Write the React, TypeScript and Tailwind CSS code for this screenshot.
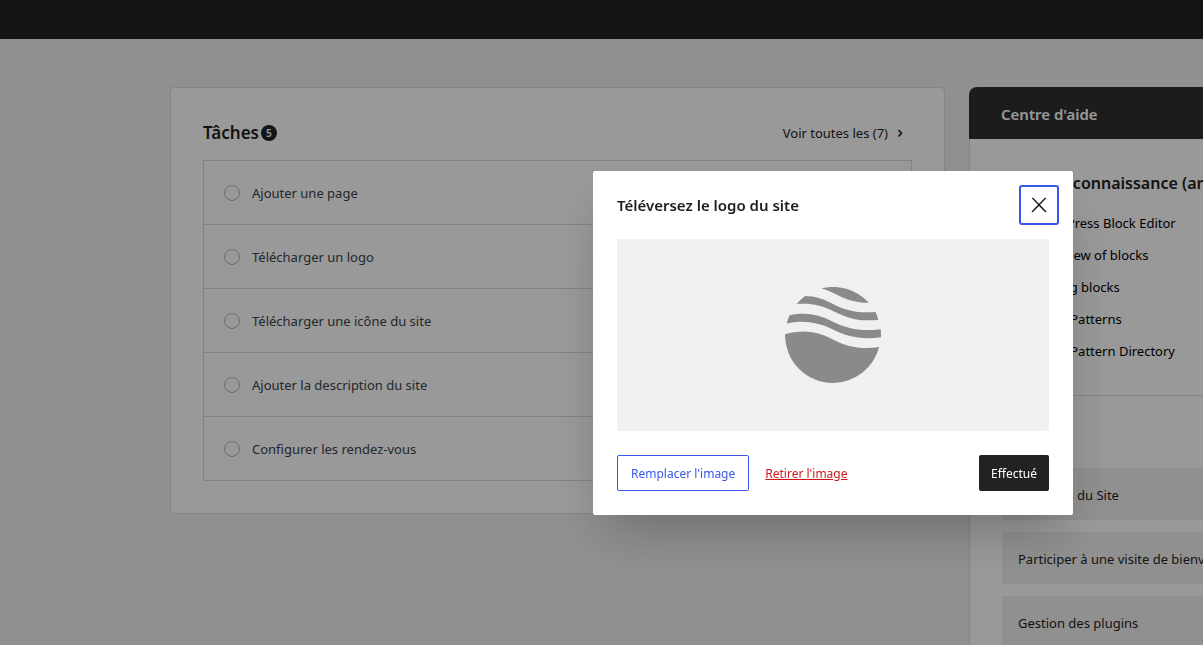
const tasks = [
  "Ajouter une page",
  "Télécharger un logo",
  "Télécharger une icône du site",
  "Ajouter la description du site",
  "Configurer les rendez-vous",
];

const articles = [
  "WordPress Block Editor",
  "Overview of blocks",
  "Adding blocks",
  "Block Patterns",
  "Block Pattern Directory",
];

const tours = [
  "Réglages du Site",
  "Participer à une visite de bienvenue",
  "Gestion des plugins",
];

const ChevronIcon = () => (
  <svg viewBox="0 0 8 10" className="h-[10px] w-2" fill="none" stroke="currentColor" strokeWidth="1.6" aria-hidden="true">
    <path d="M2.5 1 5.5 4.2 2.5 7.5" />
  </svg>
);

const CloseIcon = () => (
  <svg viewBox="0 0 24 24" className="h-6 w-6" fill="currentColor" aria-hidden="true">
    <path d="M13 11.8l6.1-6.3-1-1-6.1 6.2-6.1-6.2-1 1 6.1 6.3-6.5 6.7 1 1 6.5-6.6 6.5 6.6 1-1z" />
  </svg>
);

const SiteLogo = () => (
  <svg viewBox="0 0 96 96" className="h-24 w-24" fill="#8a8a8a" role="img" aria-label="Logo">
    <path d="M36.5 1.4A48 48 0 0 1 83.8 15.8C72 16 62 13 54 8.8C48 5.4 42 2.8 36.5 1.4Z" />
    <path d="M20.2 8.9C30 9 39 12 48 16.9C61 23.7 74 26.4 90.6 25A48 48 0 0 1 93.3 32.8C76 34.8 63 31.4 50 24.9C37 18.2 26 15.9 11.6 16.9A48 48 0 0 1 20.2 8.9Z" />
    <path d="M4.6 28.2C21 24.8 34 27.4 48 34.8C63 42.2 77 44.6 95.7 42.2A48 48 0 0 1 95.9 50.2C77 52.7 63 50.2 48 42.6C33 35 18 33 1.7 36.5A48 48 0 0 1 4.6 28.2Z" />
    <path d="M0 47.3C17 42 33 44.3 48 52.4C62 60 77 62.5 94.2 60A48 48 0 0 1 48 96A48 48 0 0 1 0 47.3Z" />
  </svg>
);

const TasksCard = () => (
  <section className="min-w-[775px] flex-1 self-start rounded border border-[#dcdcde] bg-white px-8 pb-8">
    <div className="flex h-[72px] items-center justify-between pt-[18px]">
      <h2 className="flex items-center gap-0.5 text-[17px] font-semibold text-[#1e1e1e]">
        Tâches
        <span className="flex h-4 w-4 items-center justify-center rounded-full bg-[#1d2327] text-[10px] leading-4 text-white">
          5
        </span>
      </h2>
      <a href="#taches" className="flex items-center gap-2 pt-0.5 pr-2 text-[13px] text-[#1e1e1e]">
        Voir toutes les (7)
        <ChevronIcon />
      </a>
    </div>
    <ul className="border border-b-0 border-[#dcdcde]">
      {tasks.map((task) => (
        <li key={task} className="h-16 border-b border-[#dcdcde]">
          <label className="flex h-full items-center gap-3 px-5 text-[13px] text-[#3c434a]">
            <input
              type="checkbox"
              className="h-4 w-4 appearance-none rounded-full border border-[#b4b9be]"
            />
            <span className="pt-0.5">{task}</span>
          </label>
        </li>
      ))}
    </ul>
  </section>
);

const HelpCenter = () => (
  <aside className="w-[527px] shrink-0 self-start">
    <h2 className="flex h-[52px] items-center rounded-t-lg bg-[#303030] px-8 pt-0.5 text-[15px] font-semibold text-white">
      Centre d'aide
    </h2>
    <div className="border border-t-0 border-[#dcdcde] bg-white">
      <div className="border-b border-[#dcdcde] px-8 pt-8 pb-7">
        <h3 className="pl-1.5 text-base leading-6 font-semibold text-[#1e1e1e]">
          Base de connaissance (articles)
        </h3>
        <ul className="pt-3">
          {articles.map((article) => (
            <li key={article}>
              <a href="#article" className="flex h-8 items-center pt-0.5 pl-8 text-[13px] text-black">
                {article}
              </a>
            </li>
          ))}
        </ul>
      </div>
      <ul className="space-y-3 px-8 pt-[72px] pb-8">
        {tours.map((tour) => (
          <li key={tour}>
            <a href="#visite" className="flex h-[52px] items-center bg-[#f0f0f0] px-4 pt-1 text-[13px] text-[#1e1e1e]">
              {tour}
            </a>
          </li>
        ))}
      </ul>
    </div>
  </aside>
);

const LogoDialog = () => (
  <div className="fixed inset-0 flex items-center justify-center bg-black/40 pt-[41px] pl-[463px]">
    <div
      role="dialog"
      aria-modal="true"
      aria-labelledby="dialog-title"
      className="w-[480px] rounded-xs bg-white px-6 pb-6 shadow-2xl"
    >
      <div className="-mr-[10px] flex h-[68px] items-center justify-between">
        <h1 id="dialog-title" className="text-[15px] font-semibold text-[#1e1e1e]">
          Téléversez le logo du site
        </h1>
        <button
          type="button"
          aria-label="Fermer"
          className="flex h-10 w-10 items-center justify-center rounded-[3px] border-2 border-[#3858e9] text-[#1e1e1e]"
        >
          <CloseIcon />
        </button>
      </div>
      <div className="flex h-48 items-center justify-center rounded-xs bg-[#f0f0f0]">
        <SiteLogo />
      </div>
      <div className="flex items-center gap-4 pt-6 text-xs">
        <button type="button" className="h-9 rounded-xs border border-[#3858e9] px-[13px] pt-0.5 text-[#3858e9]">
          Remplacer l'image
        </button>
        <button type="button" className="pt-0.5 text-[#cc1818] underline">
          Retirer l'image
        </button>
        <button type="button" className="ml-auto h-9 rounded-xs bg-[#222] px-3 pt-0.5 text-white">
          Effectué
        </button>
      </div>
    </div>
  </div>
);

const App = () => {
  return (
    <div className="h-screen overflow-hidden bg-[#f0f0f0] font-['Noto_Sans',sans-serif]">
      <header className="h-[39px] bg-[#222]" />
      <main className="flex gap-6 pt-12 pl-[170px]">
        <TasksCard />
        <HelpCenter />
      </main>
      <LogoDialog />
    </div>
  );
};

export default App;
